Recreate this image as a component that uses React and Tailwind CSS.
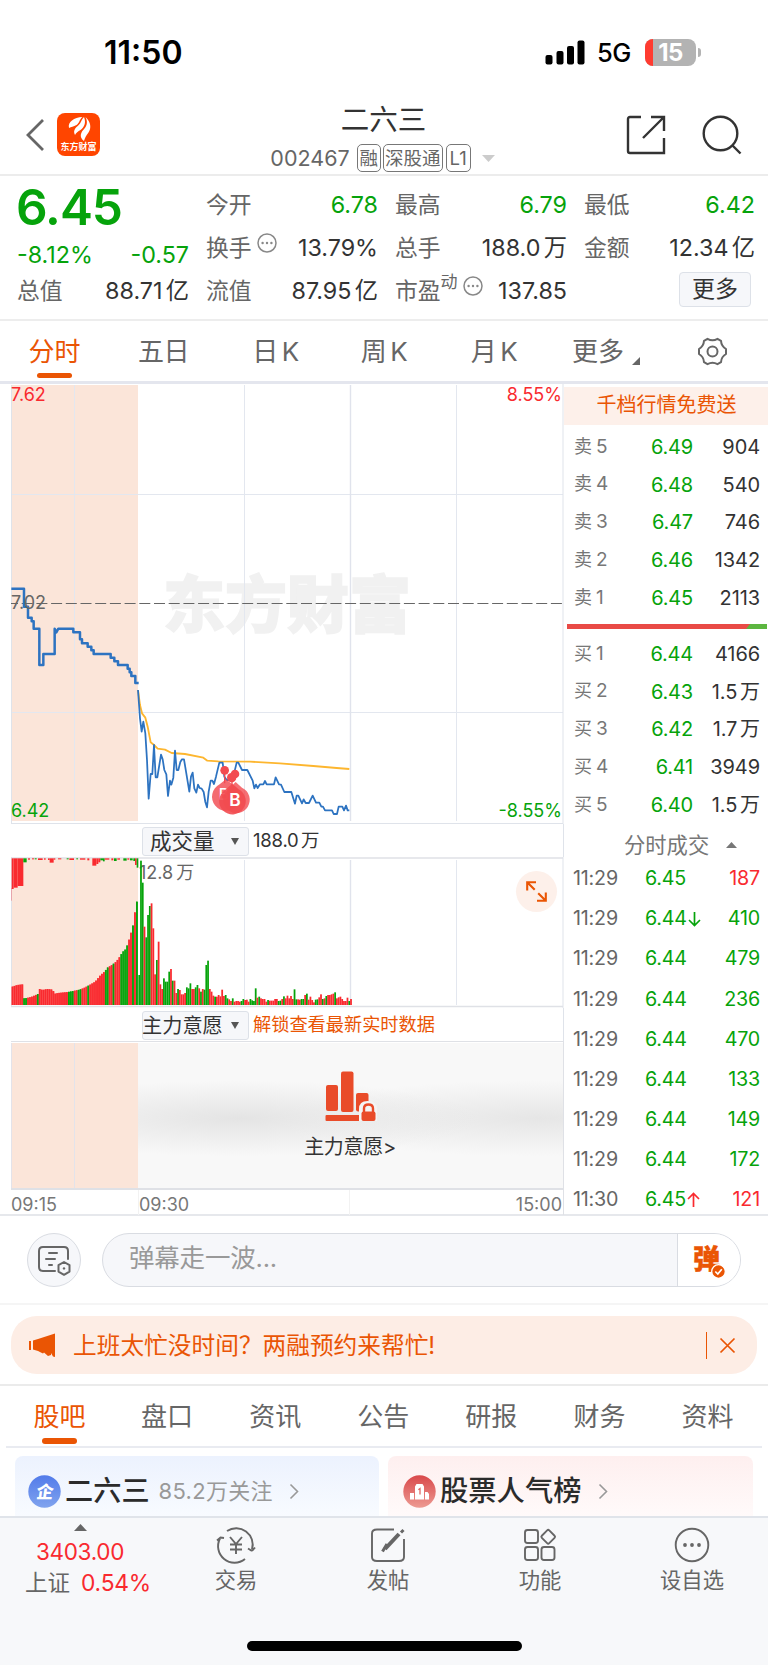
import React from "react";

const asks = [
  ["卖5", "6.49", "904"],
  ["卖4", "6.48", "540"],
  ["卖3", "6.47", "746"],
  ["卖2", "6.46", "1342"],
  ["卖1", "6.45", "2113"],
];
const bids = [
  ["买1", "6.44", "4166"],
  ["买2", "6.43", "1.5万"],
  ["买3", "6.42", "1.7万"],
  ["买4", "6.41", "3949"],
  ["买5", "6.40", "1.5万"],
];
const trades = [
  ["11:29", "6.45", "", "187", true],
  ["11:29", "6.44", "down", "410", false],
  ["11:29", "6.44", "", "479", false],
  ["11:29", "6.44", "", "236", false],
  ["11:29", "6.44", "", "470", false],
  ["11:29", "6.44", "", "133", false],
  ["11:29", "6.44", "", "149", false],
  ["11:29", "6.44", "", "172", false],
  ["11:30", "6.45", "up", "121", true],
];

const RED = "#f92a2f";
const GREEN = "#06a30b";

/* Pre-market volume outline: x, height, sampled between points */
const auctionProfile = [
  [11, 54], [16, 56], [28, 60], [45, 62], [46, 20], [57, 21], [72, 25], [90, 33], [92, 49], [104, 45], [118, 48], [136, 46],
  [137, 33], [150, 36], [180, 39], [196, 42], [215, 46], [228, 51], [245, 60], [262, 70], [278, 90], [292, 102], [297, 111],
  [312, 120], [325, 130], [338, 148], [343, 158], [354, 168], [362, 190], [369, 215], [375, 236], [380, 270], [386, 310],
];
const auctionGreen = [[46, 57], [86, 91], [137, 142], [178, 196], [212, 218], [240, 246], [293, 305], [316, 322], [340, 360], [364, 368], [374, 378], [385, 390]];
const heightAt = (x) => {
  for (let i = 1; i < auctionProfile.length; i++) {
    const [x1, h1] = auctionProfile[i];
    const [x0, h0] = auctionProfile[i - 1];
    if (x <= x1) return h0 + ((h1 - h0) * (x - x0)) / (x1 - x0);
  }
  return 310;
};
const auctionBars = Array.from({ length: 65 }, (_, i) => {
  const x = 11 + i * 5.83;
  const mid = x + 2.9;
  return [x, heightAt(mid), auctionGreen.some(([a, b]) => mid >= a && mid <= b)];
});

const volume =
  "90g 433g 367g 235r 203g 270g 297g 305r 230r 92r 135g 190r 62r 48r 80g 70g 70g 100g 108r 73g 73r 36r 48g 45r 32r 32r 36r 53g 50g 65g 48r 48r 53g 60g 50r 40g 48r 46g 120g 133g 48r 40r 28r 25g 25r 30r 26r 46r 27r 30g 20g 17r 12r 20g 10r 12r 12r 10r 12g 18g 15r 16r 10r 18g 14g 12g 50g 22r 25g 20r 18r 18r 10r 15g 13r 13r 13r 18r 18r 12g 13g 18r 26g 20r 28r 20r 27r 18r 47g 17g 17r 16r 18g 18g 30r 34g 16r 25r 15r 8r 16g 17g 23r 32r 18g 20r 27g 30r 30r 32r 34r 38g 20r 23r 25r 18r 12r 12r 22r 12g 18r"
    .split(" ")
    .map((t) => [parseInt(t, 10), t.endsWith("g")]);

const topBars = [
  [11, 6, 92, 0], [17, 12, 88, 0], [29, 17, 83, 0], [46, 10, 12, 1], [60, 6, 4, 0], [72, 6, 3, 0], [80, 6, 3, 1], [90, 14, 5, 0],
  [108, 5, 4, 0], [120, 5, 5, 0], [125, 12, 13, 0], [137, 5, 4, 0], [150, 10, 3, 0], [176, 6, 3, 1], [184, 14, 5, 0], [205, 5, 3, 1],
  [216, 16, 4, 0], [238, 6, 6, 0], [253, 12, 22, 0], [265, 6, 17, 0], [271, 6, 12, 0], [277, 8, 6, 1], [285, 5, 9, 1], [290, 14, 4, 0],
  [310, 6, 6, 0], [318, 8, 8, 1], [328, 8, 4, 0], [346, 10, 7, 1], [358, 6, 4, 0], [366, 8, 6, 1], [376, 5, 8, 1], [381, 5, 20, 0], [386, 5, 28, 1],
];

const auctionLine =
  "34,626 72,626 72,680 84,680 84,713 95,713 95,724 101,724 101,746 118,746 118,855 130,855 130,822 164,822 164,746 169,757 175,746 220,746 220,757 240,757 240,778 246,778 246,790 263,790 263,800 274,800 274,811 281,811 281,822 332,822 332,833 343,833 343,844 354,844 354,855 383,855 383,866 389,866 389,877 394,877 394,888 406,888 406,909 416,909";
const priceLine =
  "24,30 30,115 35,155 40,125 46,160 51,240 56,356 62,282 67,282 72,195 77,292 82,292 93,224 98,238 103,270 109,283 114,348 120,302 124,314 130,293 135,212 140,270 145,270 151,246 156,238 162,238 178,335 183,290 188,278 193,325 199,338 204,314 209,324 215,326 221,336 226,366 231,382 236,335 242,302 247,302 252,312 258,290 268,248 278,248 283,290 290,300 300,300 310,290 320,248 325,248 336,270 352,270 368,302 373,325 378,314 383,324 390,313 400,313 405,303 410,313 432,313 437,292 447,313 453,314 463,336 484,336 495,371 500,347 505,347 516,370 521,358 527,369 537,369 548,347 558,368 568,368 574,380 579,380 585,391 606,391 611,402 621,402 626,380 637,380 642,391 648,377 653,391 658,391";
const avgLine =
  "24,30 30,75 36,100 46,113 53,140 62,187 72,195 83,206 105,209 125,219 165,222 220,233 232,242 265,244 360,245 450,250 550,258 620,264 658,267";

/* Sets a Chinese unit slightly apart from the number before it */
function Amount({ text }) {
  const unit = /[万亿]$/.test(text) ? text.slice(-1) : "";
  if (!unit) return text;
  return <>{text.slice(0, -1)}<span className="ml-[0.14em]">{unit}</span></>;
}

function StatusBar() {
  return (
    <div className="flex h-[104px] shrink-0 items-start justify-between pl-[104px] pr-[67px] pt-[32px] text-black">
      <div className="pt-px text-[32px] font-semibold leading-[40px]">11:50</div>
      <div className="flex h-[40px] items-center">
        <svg className="h-[25px] w-[40px]" viewBox="0 0 40 25">
          <rect x="0.5" y="15" width="7" height="9.5" rx="2" />
          <rect x="11.5" y="11" width="7" height="13.5" rx="2" />
          <rect x="22" y="6" width="7" height="18.5" rx="2" />
          <rect x="32.5" y="0.5" width="7" height="24" rx="2" />
        </svg>
        <div className="ml-[12px] w-[37px] pt-[2px] text-[25.500px] font-medium leading-[36px] tracking-[-0.4px]">5G</div>
        <div className="relative ml-[11px] flex h-[27px] w-[51px] items-center justify-center overflow-hidden rounded-[8px] bg-[#b3b3b3]">
          <div className="absolute inset-y-0 left-0 w-[8px] bg-[#ff3b30]" />
          <span className="relative text-[24px] font-bold leading-[27px] tracking-[-0.5px] text-white">15</span>
        </div>
        <div className="ml-[2px] h-[9px] w-[3px] rounded-r-full bg-[#b3b3b3]" />
      </div>
    </div>
  );
}

function Tag({ children, w }) {
  return <span className={"flex h-[28px] items-center justify-center rounded-[5px] border border-[#777] text-[18.5px] leading-[26px] " + w}>{children}</span>;
}

function Header() {
  return (
    <div className="flex h-[72px] shrink-0 justify-between border-b-2 border-[#ececec] pl-[25px] pr-[26px]">
      <div className="flex w-[200px] items-start pt-[9px]">
        <svg className="mt-[5px] h-[34px] w-[20px]" viewBox="0 0 20 34" fill="none" stroke="#666" strokeWidth="2.8">
          <path d="M18 2 L3 17 L18 32" />
        </svg>
        <div className="ml-[12px] flex h-[43px] w-[43px] flex-col items-center rounded-[8px] bg-[#ff4500]">
          <svg className="mt-[3px] h-[25px] w-[26px]" viewBox="0 0 26 25" fill="#fff">
            <path d="M3 12 C1.500 6 8 1.500 16.500 1 C13 4 13.500 7 10.500 9 C7.500 11 5 10.500 3 12Z" />
            <path d="M9 19 C6 13 11.500 11 14 7.500 C15.500 5 16 3 18 1 C20.500 7 18 11.500 14.500 14 C12 15.500 10 16.500 9 19Z" />
            <path d="M18 25 C12.500 21 15 16 18.500 12.500 C21.500 9 21.500 5 19.500 1 C25 6 25.500 12 22.500 16.500 C20 20 19 21.500 18 25Z" />
          </svg>
          <div className="whitespace-nowrap text-[9px] font-bold leading-[12px] text-white [font-family:'Noto_Sans_CJK_SC',sans-serif]">东方财富</div>
        </div>
      </div>
      <div className="flex flex-col items-center">
        <div className="h-[36px] text-[28.500px] leading-[32px] text-[#333]">二六三</div>
        <div className="flex items-center pr-[2px] pt-[4px] text-[#666]">
          <span className="mr-[7px] text-[21.500px] leading-[28px]">002467</span>
          <div className="flex gap-[2px]">
            <Tag w="w-[24px]">融</Tag>
            <Tag w="w-[60px]">深股通</Tag>
            <Tag w="ml-px w-[25px]">L1</Tag>
          </div>
          <svg className="ml-[11px] h-[7px] w-[13px]" viewBox="0 0 13 7" fill="#ccc"><path d="M0 0H13L6.5 7Z" /></svg>
        </div>
      </div>
      <div className="flex w-[200px] items-start justify-end gap-[36px] pt-[11px]">
        <svg className="h-[40px] w-[40px]" viewBox="0 0 40 40" fill="none" stroke="#333" strokeWidth="2.4">
          <path d="M15 2 H4 Q2 2 2 4 V36 Q2 38 4 38 H38 V23 M25 2 H38 V16 M38 2 L17 23" />
        </svg>
        <svg className="h-[40px] w-[40px]" viewBox="0 0 40 40" fill="none" stroke="#333" strokeWidth="2.4">
          <circle cx="18.5" cy="18.5" r="16.8" /><path d="M30 30 L38.500 38.500" />
        </svg>
      </div>
    </div>
  );
}

function Dots() {
  return (
    <svg className="h-[20px] w-[20px]" viewBox="0 0 20 20" fill="none" stroke="#888" strokeWidth="1.5">
      <circle cx="10" cy="10" r="9" />
      <g fill="#888" stroke="none"><circle cx="5.600" cy="10" r="1.200" /><circle cx="10" cy="10" r="1.200" /><circle cx="14.400" cy="10" r="1.200" /></g>
    </svg>
  );
}

function Cell({ label, value, green, dots, sup }) {
  return (
    <div className="flex h-[43px] items-center whitespace-nowrap">
      <span className="text-[22.800px] text-[#666]">{label}</span>
      {sup && <span className="pb-[17px] text-[17px] leading-none text-[#666]">{sup}</span>}
      {dots && <span className="ml-[5px] pb-[10px]"><Dots /></span>}
      <span className={"ml-auto text-[23.300px] " + (green ? "text-[#06a30b]" : "text-[#333]")}><Amount text={value} /></span>
    </div>
  );
}

function Quote() {
  return (
    <div className="grid h-[145px] shrink-0 grid-cols-[172px_172px_172px_171px] gap-x-[17px] border-b-2 border-[#ededed] pl-[17px] pt-[7px] leading-[43px]">
      <div>
        <div className="-ml-px h-[54px] text-[49.500px] font-semibold leading-[48px] tracking-[-1px] text-[#06a30b]">6.45</div>
        <div className="flex h-[34px] items-center justify-between text-[23.300px] text-[#06a30b]"><span>-8.12%</span><span>-0.57</span></div>
        <div className="-mt-[2px]"><Cell label="总值" value="88.71亿" /></div>
      </div>
      <div><Cell label="今开" value="6.78" green /><Cell label="换手" value="13.79%" dots /><Cell label="流值" value="87.95亿" /></div>
      <div><Cell label="最高" value="6.79" green /><Cell label="总手" value="188.0万" /><Cell label="市盈" value="137.85" sup="动" dots /></div>
      <div>
        <Cell label="最低" value="6.42" green />
        <Cell label="金额" value="12.34亿" />
        <div className="flex h-[41px] items-center justify-end pr-[4px]">
          <div className="flex h-[35px] w-[72px] items-center justify-center rounded-[4px] border border-[#dde1e8] bg-[#f6f7fa] text-[23px] leading-none text-[#333]">更多</div>
        </div>
      </div>
    </div>
  );
}

const periods = [
  ["五日", "", "w-[109px]"],
  ["日", "K", "w-[115px]"],
  ["周", "K", "w-[102px]"],
  ["月", "K", "w-[118px]"],
];

function PeriodTabs() {
  return (
    <div className="flex h-[63px] shrink-0 border-b-[3px] border-[#e4e6ee] text-[26px] leading-[38px] text-[#666]">
      <div className="flex w-[109px] flex-col items-center pt-[12px] text-[#ea5504]">
        <span>分时</span>
        <span className="mt-[2px] h-[5px] w-[35px] rounded-full bg-[#ea5504]" />
      </div>
      {periods.map(([t, k, w]) => (
        <div key={t} className={"pt-[12px] text-center tracking-[-0.5px] " + w}>{t}{k && <span className="ml-[4px]">{k}</span>}</div>
      ))}
      <div className="flex w-[104px] pl-[19px] pt-[12px]">
        <span>更多</span>
        <svg className="ml-[8px] mt-[24px] h-[8px] w-[8px]" viewBox="0 0 8 8" fill="#666"><path d="M8 0V8H0Z" /></svg>
      </div>
      <svg className="ml-[40px] mt-[16px] h-[29px] w-[31px]" viewBox="0 0 31 29" fill="none" stroke="#666" strokeWidth="2" strokeLinejoin="round">
        <path d="M10.500 1.800 Q15.500 4.600 20.500 1.800 L24 3.800 Q24.300 9.200 29 12 V17 Q24.300 19.800 24 25.200 L20.500 27.200 Q15.500 24.400 10.500 27.200 L7 25.200 Q6.700 19.800 2 17 V12 Q6.700 9.200 7 3.800Z" />
        <circle cx="15.500" cy="14.500" r="5" />
      </svg>
    </div>
  );
}

function PriceChart() {
  return (
    <svg className="block h-[440px] w-[564px]" viewBox="0 384 564 440" fill="none">
      <rect x="11" y="385" width="127" height="436" fill="#fbe5d9" />
      <text x="163" y="628" fontSize="62" fontWeight="900" fill="#f1f1f1" stroke="#f1f1f1" strokeWidth="1.500" fontFamily="Noto Sans CJK SC">东方财富</text>
      <path d="M74.500 385V821M244.500 385V821M456.500 385V821M11 494.500H563M11 712.500H563" stroke="#e3e7ef" />
      <path d="M350.500 385V821" stroke="#e0e3ec" strokeWidth="1.400" />
      <path d="M11.500 385V824M11 823.500H563M563 384V824" stroke="#dfe3ea" />
      <path d="M11 603.500H563" stroke="#666" strokeDasharray="11 3.700" strokeDashoffset="4" />
      <g transform="translate(0 380) scale(0.33333)">
        <polyline points={auctionLine} stroke="#2d73c1" strokeWidth="7.500" strokeLinejoin="round" />
        <g transform="translate(390 900)" strokeLinejoin="round">
          <polyline points={avgLine} stroke="#fdb62f" strokeWidth="5.500" />
          <polyline points={priceLine} stroke="#2d73c1" strokeWidth="5.300" />
          <path d="M284 271V310M306 292V330" stroke="#f24b50" strokeWidth="4" />
          <g fill="#f24b50">
            <circle cx="284" cy="271" r="13" />
            <circle cx="315" cy="282" r="13" />
            <circle cx="305" cy="293" r="14" />
            <path opacity="0.820" d="M288 298 L307 313 A42 42 0 1 1 269 313Z" />
          </g>
          <text x="266" y="361" fontSize="46" fontWeight="500" fill="#fff" fontFamily="Inter">B</text>
          <path opacity="0.800" fill="#f24b50" d="M317 306 L336 323 A40 40 0 1 1 292 330Z" />
          <path opacity="0.900" fill="#f24b50" d="M306 312 L326 328 A40 40 0 1 1 284 331Z" />
          <text x="298" y="377" fontSize="52" fontWeight="600" fill="#fff" fontFamily="Inter">B</text>
        </g>
      </g>
      <g fontFamily="Inter" fontSize="18">
        <text x="11" y="401" fill={RED}>7.62</text>
        <text x="562" y="401" fill={RED} textAnchor="end">8.55%</text>
        <text x="11" y="609" fill="#666">7.02</text>
        <text x="11" y="816.500" fill={GREEN}>6.42</text>
        <text x="562" y="816.500" fill={GREEN} textAnchor="end">-8.55%</text>
      </g>
    </svg>
  );
}

function IndicatorBar({ name, size, children }) {
  return (
    <div className="flex h-[33px] items-center border-r border-[#dfe3ea] pl-[142px] pt-px">
      <div className="flex h-[29px] w-[107px] shrink-0 items-center justify-between rounded-[3px] border border-[#dde1e8] bg-[#f6f7fa] pr-[9px] leading-[27px] text-[#333]">
        <span className={"whitespace-nowrap " + size}>{name}</span>
        <svg className="h-[7px] w-[8px] shrink-0" viewBox="0 0 8 7" fill="#555"><path d="M0 0H8L4 7Z" /></svg>
      </div>
      {children}
    </div>
  );
}

function VolumeChart() {
  return (
    <div className="relative h-[151px]">
      <svg className="block h-[151px] w-[564px]" viewBox="0 857 564 151" fill="none">
        <rect x="11" y="858" width="127" height="147" fill="#fbe5d9" />
        <path d="M74.500 858V1005M244.500 860V1005M456.500 860V1005" stroke="#e3e7ef" />
        <path d="M350.500 860V1005" stroke="#e0e3ec" strokeWidth="1.400" />
        <path d="M11 858H563M11 1006.500H563" stroke="#dfe1e6" strokeWidth="1.600" />
        <path d="M11.500 857V1007M563 857V1008" stroke="#dfe3ea" />
        <g fontSize="18" fill="#666" fontFamily="Inter, 'Noto Sans CJK SC'"><text x="139" y="878.500">12.8<tspan dx="3">万</tspan></text></g>
        <g transform="translate(8 855) scale(0.33333)">
          {auctionBars.map(([x, h, g], i) => (
            <g key={i}>
              <rect x={x} y={450 - h} width="5.850" height={h} fill={g ? GREEN : RED} opacity="0.900" />
              <rect x={x} y={450 - h} width="4" height={h} fill={g ? GREEN : RED} />
            </g>
          ))}
          {topBars.map(([x, w, h, g], i) => <rect key={i} x={x} y="10" width={w} height={h} fill={g ? GREEN : RED} />)}
          <rect x="10" y="100" width="2" height="37" fill={RED} opacity="0.500" />
          {volume.map(([h, g], i) => <rect key={i} x={391 + i * 5.295} y={450 - h} width="5.295" height={h} fill={g ? GREEN : RED} />)}
        </g>
      </svg>
      <div className="absolute left-[516px] top-[14px] flex h-[41px] w-[41px] items-center justify-center rounded-full bg-[#fdf0ea]">
        <svg className="h-[21px] w-[21px]" viewBox="0 0 21 21" fill="none" stroke="#ea5504" strokeWidth="2.100">
          <path d="M1.200 9.500V1.200H10M1.200 1.200L8.700 8.700M19.800 11.500V19.800H11M19.800 19.800L12.200 12.200" />
        </svg>
      </div>
    </div>
  );
}

function IntentPanel() {
  return (
    <div className="ml-[11px] flex h-[149px] border-b-2 border-r border-t border-[#dfe1e6] pt-px">
      <div className="flex w-[127px] bg-[#fbe5d9]"><div className="w-[64px] border-x border-[#e3e3ea]" /></div>
      <div className="flex flex-1 flex-col items-center bg-[#f8f8f8] bg-[radial-gradient(ellipse_240px_38px_at_100px_52%,#e4e4e4,transparent),radial-gradient(ellipse_260px_38px_at_400px_52%,#e6e6e6,transparent)] pt-[28px]">
        <svg className="h-[51px] w-[52px]" viewBox="0 0 52 51" fill="#e94b29">
          <rect x="1" y="14" width="12" height="26" rx="2" />
          <rect x="16" y="0.500" width="12.500" height="40.500" rx="2" />
          <rect x="31" y="22" width="12.500" height="18.500" rx="2" />
          <rect x="0.500" y="44" width="35" height="6" rx="1" />
          <path d="M34 50V38Q34 30 42.500 30Q52 30 52 38V50Z" fill="#f4f4f4" />
          <rect x="36.500" y="40.500" width="14" height="9.500" rx="2" />
          <path d="M39 41V37.500Q39 33.500 43.500 33.500Q48 33.500 48 37.500V41" fill="none" stroke="#e94b29" strokeWidth="2.400" />
        </svg>
        <div className="mt-[11px] pr-px text-[20px] leading-[28px] tracking-[-0.3px] text-[#333]">主力意愿&gt;</div>
      </div>
    </div>
  );
}

function BookRow({ row }) {
  return (
    <div className="flex h-[37.8px] items-center text-[20px]">
      <span className="w-[56px] text-[18px] text-[#777]"><span className="mr-[4px]">{row[0][0]}</span><span className="text-[19px]">{row[0][1]}</span></span>
      <span className="w-[63px] text-right tracking-[-0.2px] text-[#06a30b]">{row[1]}</span>
      <span className="flex-1 text-right tracking-[-0.1px] text-[#333]"><Amount text={row[2]} /></span>
    </div>
  );
}

function OrderBook() {
  return (
    <div className="w-[204px] shrink-0 pt-[3px]">
      <div className="h-[38px] bg-[#fdf0ea] pl-px text-center text-[20px] leading-[36px] text-[#ea5504]">千档行情免费送</div>
      <div className="pl-[10px] pr-[8px] pt-[3px]">{asks.map((r) => <BookRow key={r[0]} row={r} />)}</div>
      <svg className="ml-[3px] mt-[7px] block h-[5px] w-[200px]" viewBox="0 0 200 5">
        <rect width="200" height="5" fill="#5cb640" /><path d="M0 0H183L179 5H0Z" fill="#e94a46" />
      </svg>
      <div className="pl-[10px] pr-[8px] pt-[6px]">{bids.map((r) => <BookRow key={r[0]} row={r} />)}</div>
      <div className="flex h-[35px] items-center pl-[60px] pt-[8px] text-[21.300px] text-[#777]">
        分时成交
        <svg className="ml-[17px] h-[6px] w-[11px]" viewBox="0 0 11 6" fill="#777"><path d="M0 6H11L5.500 0Z" /></svg>
      </div>
      <div className="pl-[9px] pr-[8px]">
        {trades.map(([t, p, dir, v, up], i) => (
          <div key={i} className="flex h-[40.1px] items-center text-[19.700px] tracking-[-0.2px]">
            <span className="w-[72px] text-[#666]">{t}</span>
            <span className="text-[#06a30b]">{p}</span>
            {dir && (
              <svg className="ml-px h-[15px] w-[13px]" viewBox="0 0 13 15" fill="none" stroke={dir === "up" ? RED : GREEN} strokeWidth="1.700">
                {dir === "up" ? <path d="M6.500 15V1.500M1 7L6.500 1.500L12 7" /> : <path d="M6.500 0V13.500M1 8L6.500 13.500L12 8" />}
              </svg>
            )}
            <span className={"ml-auto " + (up ? "text-[#f92a2f]" : "text-[#06a30b]")}>{v}</span>
          </div>
        ))}
      </div>
    </div>
  );
}

function Market() {
  return (
    <div className="flex h-[832px] shrink-0 border-b-2 border-[#e6e8ec]">
      <div className="w-[564px] shrink-0">
        <PriceChart />
        <IndicatorBar name="成交量" size="pl-[7px] text-[21.500px]">
          <span className="ml-[4px] text-[18.500px] tracking-[-0.2px] text-[#333]"><Amount text="188.0万" /></span>
        </IndicatorBar>
        <VolumeChart />
        <IndicatorBar name="主力意愿" size="-ml-px text-[20.200px]">
          <span className="ml-[4px] text-[18.200px] text-[#ea5504]">解锁查看最新实时数据</span>
        </IndicatorBar>
        <IntentPanel />
        <div className="flex h-[25px] border-r border-[#dfe1e6] pl-[11px] pr-px text-[18px] leading-[29px] text-[#777]">
          <span className="w-[127px]">09:15</span>
          <span className="w-[212px] border-x border-[#f2f2f2]">09:30</span>
          <span className="ml-auto">15:00</span>
        </div>
      </div>
      <OrderBook />
    </div>
  );
}

function Danmu() {
  return (
    <div className="flex h-[89px] shrink-0 items-center border-b-2 border-[#f5f5f5] px-[27px] pt-px">
      <div className="flex h-[54px] w-[54px] items-center justify-center rounded-full border border-[#d9dce2] bg-[#f6f7fa]">
        <svg className="h-[31px] w-[35px]" viewBox="0 0 35 31" fill="none" stroke="#666" strokeWidth="2" strokeLinecap="round">
          <path d="M18 26H6Q2 26 2 22V6Q2 2 6 2H27Q31 2 31 6V14" />
          <path d="M12 8H20M9 14H18M12 20H15" />
          <path d="M27 17L32.500 20.200V26.600L27 29.800L21.500 26.600V20.200Z" strokeLinejoin="round" />
          <circle cx="27" cy="23.400" r="1.200" fill="#666" stroke="none" />
        </svg>
      </div>
      <div className="ml-[21px] flex h-[54px] flex-1 overflow-hidden rounded-full border-[1.500px] border-[#d9dce2] bg-[#f6f7fa]">
        <div className="flex-1 pl-[26px] text-[25.500px] leading-[48px] tracking-[-0.2px] text-[#999]">弹幕走一波...</div>
        <div className="relative w-[63px] border-l-[1.500px] border-[#d9dce2] bg-white pl-[15px] text-[27px] font-black leading-[52px] text-[#ea5504] [-webkit-text-stroke:0.5px_#ea5504]">
          弹
          <svg className="absolute left-[33px] top-[30px] h-[15px] w-[15px]" viewBox="0 0 15 15" fill="none">
            <circle cx="7.500" cy="7.500" r="6.800" fill="#ea5504" stroke="#fff" strokeWidth="1.300" />
            <path d="M4.300 7.500L6.800 10L10.800 5.200" stroke="#fff" strokeWidth="1.700" />
          </svg>
        </div>
      </div>
    </div>
  );
}

function Notice() {
  return (
    <div className="flex h-[81px] shrink-0 items-start border-b-2 border-[#ebebeb] px-[11px] pt-[11px]">
      <div className="flex h-[58px] w-full items-center rounded-[26px] bg-[#fdede5] pl-[17px] pr-[21px] text-[#ea5504]">
        <svg className="h-[25px] w-[29px]" viewBox="0 0 29 25" fill="#ea5504">
          <path d="M1 8H3V17H1ZM5 7.500L10 6L27 0.500V24L25 23.500L23 20V22L20 23L16 19.500L15 20.500L10 18L5 16.500Z" />
        </svg>
        <span className="ml-[16px] pt-px text-[23.700px] leading-[40px]">上班太忙没时间？两融预约来帮忙!</span>
        <span className="ml-auto h-[27px] w-[1.500px] bg-[#ea5504]" />
        <svg className="ml-[12px] h-[17px] w-[17px]" viewBox="0 0 17 17" fill="none" stroke="#ea5504" strokeWidth="1.700"><path d="M1.500 1.500L15.500 15.500M15.500 1.500L1.500 15.500" /></svg>
      </div>
    </div>
  );
}

function InfoTabs() {
  return (
    <div className="mx-[6px] flex h-[62px] shrink-0 border-b-2 border-[#e9ebf1] text-[26px] leading-[38px] text-[#666]">
      {["股吧", "盘口", "资讯", "公告", "研报", "财务", "资料"].map((t, i) => (
        <div key={t} className={"flex shrink-0 flex-col items-center pt-[12px] " + (i ? "w-[108.1px]" : "w-[107px] text-[#ea5504]")}>
          <span>{t}</span>
          {i === 0 && <span className="mt-[2px] h-[6px] w-[35px] rounded-full bg-[#ea5504]" />}
        </div>
      ))}
    </div>
  );
}

function Chevron() {
  return <svg className="h-[17px] w-[10px]" viewBox="0 0 10 17" fill="none" stroke="#999" strokeWidth="1.600"><path d="M1.500 1.500L8.500 8.500L1.500 15.500" /></svg>;
}

function Cards() {
  return (
    <div className="flex h-[68px] shrink-0 gap-[9px] px-[15px] pt-[8px]">
      <div className="flex h-[60px] w-[364px] items-center rounded-t-[8px] bg-gradient-to-b from-[#ecf2fe] to-[#f8fbff] pl-[13px] pt-[10px]">
        <svg className="h-[33px] w-[33px]" viewBox="0 0 33 33" fill="none">
          <defs><linearGradient id="blue" x2="0" y2="1"><stop stopColor="#527bea" /><stop offset="1" stopColor="#80a3ee" /></linearGradient></defs>
          <circle cx="16.500" cy="16.500" r="16.200" fill="url(#blue)" />
          <text x="11" y="23" fontSize="17" fontWeight="900" fill="#fff" fontFamily="Noto Sans CJK SC" transform="skewX(-8)">企</text>
        </svg>
        <span className="ml-[4px] text-[28.200px] font-medium text-[#2b2b2b]">二六三</span>
        <span className="ml-[9px] text-[22px] tracking-[0.3px] text-[#999]">85.2万关注</span>
        <span className="ml-[16px]"><Chevron /></span>
      </div>
      <div className="flex h-[60px] w-[365px] items-center rounded-t-[8px] bg-gradient-to-b from-[#feefef] to-[#fffafa] pl-[15px] pt-[10px]">
        <svg className="h-[33px] w-[33px]" viewBox="0 0 33 33">
          <defs><linearGradient id="rose" x2="0" y2="1"><stop stopColor="#d9494b" /><stop offset="1" stopColor="#ed9a92" /></linearGradient></defs>
          <circle cx="16.500" cy="16.500" r="16.200" fill="url(#rose)" />
          <path d="M7 18H11V24.500H7ZM12 11.500L13.500 9H19.500L21 11.500V24.500H12ZM22 17H24.500L26 19V24.500H22Z" fill="#fff" />
          <path d="M15.400 14.800L17 13.500V19.500" stroke="#df6764" strokeWidth="1.300" fill="none" />
        </svg>
        <span className="ml-[4px] text-[28.300px] font-medium text-[#2b2b2b]">股票人气榜</span>
        <span className="ml-[16px]"><Chevron /></span>
      </div>
    </div>
  );
}

function NavItem({ label, children }) {
  return (
    <div className="flex w-[152px] shrink-0 flex-col items-center pt-[8px]">
      <svg className="h-[38px] w-[40px]" viewBox="0 0 40 38" fill="none" stroke="#666" strokeWidth="1.900">{children}</svg>
      <span className="mt-px text-[21.300px] leading-[30px] text-[#666]">{label}</span>
    </div>
  );
}

function BottomNav() {
  return (
    <div className="flex h-[150px] shrink-0 flex-col border-t-2 border-[#e0e4ea] bg-[#f7f8fa]">
      <div className="flex h-[123px]">
        <div className="flex w-[160px] shrink-0 flex-col items-center pt-[6px]">
          <svg className="h-[7px] w-[13px]" viewBox="0 0 13 7" fill="#666"><path d="M0 7H13L6.500 0Z" /></svg>
          <span className="mt-[6px] text-[22.500px] leading-[30px] tracking-[-0.3px] text-[#f92a2f]">3403.00</span>
          <span className="mt-px flex w-full pl-[25px] text-[22.500px] leading-[30px] text-[#666]">上证<span className="ml-[11px] text-[22.800px] tracking-[-0.2px] text-[#f92a2f]">0.54%</span></span>
        </div>
        <NavItem label="交易">
          <path d="M11 5A16.500 16.500 0 0 1 36 23.500M36 25L32 22.500M36 25L39 21.500M29 33A16.500 16.500 0 0 1 4 12.500M1 14.500L4.500 11.500L8 12" />
          <path d="M14 11L20 18L26 11M20 18V28M14 18.500H26M14 23.500H26" />
        </NavItem>
        <NavItem label="发帖">
          <path d="M26 3.500H9Q4 3.500 4 7.500V31Q4 35 9 35H31Q36 35 36 31V13" />
          <path d="M17 23L31 8" strokeWidth="4" /><path d="M14.500 25.500L19 18M33 6.500L35.500 4" strokeWidth="3" />
        </NavItem>
        <NavItem label="功能">
          <rect x="5" y="4" width="13" height="13" rx="2.500" /><rect x="5" y="21" width="13" height="13" rx="2.500" /><rect x="21.500" y="21" width="13" height="13" rx="2.500" />
          <rect x="23" y="5.500" width="10.500" height="10.500" rx="1.500" transform="rotate(45 28.200 10.700)" />
        </NavItem>
        <NavItem label="设自选">
          <circle cx="20" cy="19" r="16.300" />
          <g fill="#666" stroke="none"><circle cx="13" cy="19" r="1.900" /><circle cx="20" cy="19" r="1.900" /><circle cx="27" cy="19" r="1.900" /></g>
        </NavItem>
      </div>
      <div className="mx-auto h-[10px] w-[275px] rounded-full bg-black" />
    </div>
  );
}

export default function App() {
  return (
    <div className="flex h-[1665px] w-[768px] flex-col overflow-hidden bg-white [font-family:Inter,'Noto_Sans_CJK_SC',sans-serif]">
      <StatusBar />
      <Header />
      <Quote />
      <PeriodTabs />
      <Market />
      <Danmu />
      <Notice />
      <InfoTabs />
      <Cards />
      <BottomNav />
    </div>
  );
}
